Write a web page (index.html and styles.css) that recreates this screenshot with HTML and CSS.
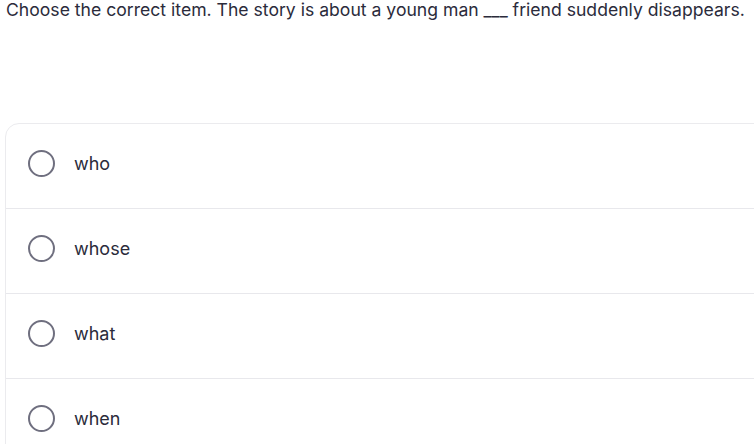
FILE: index.html
```html
<!DOCTYPE html>
<html>
<head>
<meta charset="utf-8">
<link rel="stylesheet" href="styles.css">
</head>
<body>
<div class="page">
  <p class="question">Choose the correct item. The story is about a young man ___ friend suddenly disappears.</p>
  <div class="options">
    <label class="option"><span class="radio"></span><span class="text">who</span></label>
    <label class="option"><span class="radio"></span><span class="text">whose</span></label>
    <label class="option"><span class="radio"></span><span class="text">what</span></label>
    <label class="option"><span class="radio"></span><span class="text">when</span></label>
  </div>
</div>
</body>
</html>
```
FILE: styles.css
```css
html, body {
  margin: 0;
  padding: 0;
  background: #ffffff;
}
body {
  font-family: Inter, "Noto Sans", sans-serif;
  color: #2b2b3b;
  overflow: hidden;
}
.page {
  padding: 0 0 0 6px;
}
.question {
  margin: 0;
  font-size: 17.6px;
  line-height: 20px;
  color: #2b2b3b;
  white-space: nowrap;
}
.options {
  margin-top: 103px;
  margin-left: -1px;
  width: 780px;
  border: 1px solid #ebebee;
  border-radius: 14px;
  background: #fff;
}
.option {
  display: flex;
  align-items: center;
  gap: 19px;
  height: 78px;
  padding: 0 0 6px 22px;
  border-bottom: 1px solid #e8e8ec;
}
.option:last-child {
  border-bottom: none;
}
.radio {
  width: 23px;
  height: 23px;
  border: 2.5px solid #6f6f7f;
  border-radius: 50%;
  flex: none;
}
.text {
  font-size: 18px;
  color: #2b2b3b;
}
```
